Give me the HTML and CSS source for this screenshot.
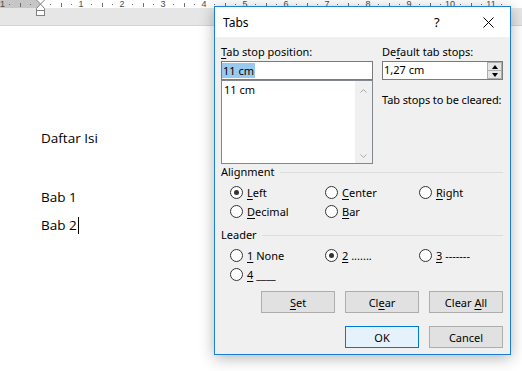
FILE: index.html
```html
<!DOCTYPE html>
<html lang="id">
<head>
    <meta charset="UTF-8">
    <meta name="viewport" content="width=device-width, initial-scale=1.0">
    <title>Tabs</title>
    <link rel="stylesheet" href="styles.css">
</head>
<body>
    <!-- Penggaris (ruler) -->
    <div class="ruler">
        <div class="ruler-strip">
            <div class="ruler-scale">
                <span class="cm">1</span>
                <span class="cm"></span>
                <span class="cm">1</span>
                <span class="cm">2</span>
                <span class="cm">3</span>
                <span class="cm">4</span>
                <span class="cm">5</span>
                <span class="cm">6</span>
                <span class="cm">7</span>
                <span class="cm">8</span>
                <span class="cm">9</span>
                <span class="cm">10</span>
                <span class="cm">11</span>
            </div>
        </div>
        <svg class="indent-marker" width="10" height="17" viewBox="0 0 10 17">
            <path d="M0.5 0 L4.5 4 L8.5 0" fill="#fff" stroke="#7f7f7f"/>
            <path d="M4.5 4 L0.5 8.5 V10.5 H8.5 V8.5 Z" fill="#fff" stroke="#7f7f7f"/>
            <rect x="0.5" y="10.5" width="8" height="5" fill="#fff" stroke="#7f7f7f"/>
        </svg>
    </div>

    <!-- Isi dokumen -->
    <main class="page">
        <p class="line">Daftar Isi</p>
        <p class="line spaced">Bab 1</p>
        <p class="line">Bab 2<span class="caret"></span></p>
    </main>

    <!-- Dialog Tabs -->
    <div class="dialog">
        <div class="titlebar">
            <span class="title">Tabs</span>
            <span class="help">?</span>
            <span class="close">
                <svg width="11" height="11" viewBox="0 0 11 11">
                    <path d="M0.5 0.5 L10.5 10.5 M10.5 0.5 L0.5 10.5" stroke="#000" stroke-width="1"/>
                </svg>
            </span>
        </div>
        <div class="dlg-body">
            <div class="stops">
                <div class="col-left">
                    <div class="lbl"><u>T</u>ab stop position:</div>
                    <div class="textbox"><span class="sel">11 cm</span></div>
                    <div class="listbox">
                        <div class="list-items">
                            <div class="list-item">11 cm</div>
                        </div>
                        <div class="scrollbar">
                            <svg width="7" height="4" viewBox="0 0 7 4"><path d="M0.5 3.5 L3.5 0.5 L6.5 3.5" fill="none" stroke="#a6a6a6"/></svg>
                            <svg width="7" height="4" viewBox="0 0 7 4"><path d="M0.5 0.5 L3.5 3.5 L6.5 0.5" fill="none" stroke="#a6a6a6"/></svg>
                        </div>
                    </div>
                </div>
                <div class="col-right">
                    <div class="lbl">De<u>f</u>ault tab stops:</div>
                    <div class="spinner">
                        <span class="spin-value">1,27 cm</span>
                        <div class="spin-btns">
                            <span class="spin-btn up"></span>
                            <span class="spin-btn down"></span>
                        </div>
                    </div>
                    <div class="note">Tab stops to be cleared:</div>
                </div>
            </div>

            <div class="group">
                <div class="group-title">Alignment</div>
                <div class="radios">
                    <div class="radio checked"><span class="circle"></span><span><u>L</u>eft</span></div>
                    <div class="radio"><span class="circle"></span><span><u>C</u>enter</span></div>
                    <div class="radio"><span class="circle"></span><span><u>R</u>ight</span></div>
                    <div class="radio"><span class="circle"></span><span><u>D</u>ecimal</span></div>
                    <div class="radio"><span class="circle"></span><span><u>B</u>ar</span></div>
                </div>
            </div>

            <div class="group leader">
                <div class="group-title">Leader</div>
                <div class="radios">
                    <div class="radio"><span class="circle"></span><span><u>1</u> None</span></div>
                    <div class="radio checked"><span class="circle"></span><span><u>2</u> .......</span></div>
                    <div class="radio"><span class="circle"></span><span><u>3</u> -------</span></div>
                    <div class="radio"><span class="circle"></span><span><u>4</u> ____</span></div>
                </div>
            </div>

            <div class="buttons">
                <button class="btn"><u>S</u>et</button>
                <button class="btn">Cl<u>e</u>ar</button>
                <button class="btn">Clear <u>A</u>ll</button>
            </div>
            <div class="buttons last">
                <button class="btn default">OK</button>
                <button class="btn">Cancel</button>
            </div>
        </div>
    </div>
</body>
</html>
```

FILE: styles.css
```css
/* Warna dasar */
:root {
    --dlg-bg: #F0F0F0;
    --dlg-border: #1C7FD6;
    --field-border: #7A7A7A;
    --btn-bg: #E1E1E1;
    --btn-border: #ADADAD;
    --group-line: #DCDCDC;
    --ruler-band: #E6E6E6;
    --ruler-margin: #C6C6C6;
    --tick: #6E6E6E;
}

html, body {
    margin: 0;
    height: 100%;
    overflow: hidden;
}

body {
    background: #FFFFFF;
    color: #000;
    font-family: "Open Sans", "Noto Sans", sans-serif;
}

/* Penggaris */
.ruler {
    position: relative;
    height: 25px;
    background: var(--ruler-band);
    border-bottom: 1px solid #D4D4D4;
}

.ruler-strip {
    height: 8px;
    background: linear-gradient(to right, var(--ruler-margin) 40px, #FFFFFF 40px);
}

.ruler-scale {
    display: flex;
    margin-left: -20px;
}

.cm {
    flex: 0 0 41px;
    height: 8px;
    text-align: center;
    font: 9px/8px "Liberation Sans", Arial, sans-serif;
    color: #4A4A4A;
    background:
        linear-gradient(var(--tick), var(--tick)) 0 3px / 1px 4px no-repeat,
        linear-gradient(var(--tick), var(--tick)) 10px 4px / 1px 1px no-repeat,
        linear-gradient(var(--tick), var(--tick)) 30px 4px / 1px 1px no-repeat;
}

.cm:first-child {
    flex-basis: 39.5px;
    box-sizing: border-box;
    padding-left: 20px;
    text-align: left;
    background-position: -1.5px 3px, 28.5px 4px, 48.5px 4px;
}

.indent-marker {
    position: absolute;
    left: 36px;
    top: 0;
}

/* Dokumen */
.page {
    padding: 98px 0 0 41px;
    font-size: 13.5px;
}

.line {
    margin: 0;
    line-height: 28px;
}

.line.spaced {
    margin-top: 31px;
}

.caret {
    display: inline-block;
    width: 1px;
    height: 17px;
    background: #000;
    vertical-align: -4px;
    margin-left: 1px;
}

/* Dialog */
.dialog {
    position: absolute;
    left: 214px;
    top: 6px;
    width: 297px;
    box-sizing: border-box;
    border: 1px solid var(--dlg-border);
    background: var(--dlg-bg);
    box-shadow: 0 3px 14px rgba(0, 0, 0, 0.3);
    font-family: "Noto Sans", sans-serif;
    font-size: 11px;
    line-height: 15px;
}

.titlebar {
    height: 30px;
    background: #FFFFFF;
    display: flex;
    align-items: center;
    padding-left: 8px;
}

.titlebar .title {
    font-size: 12px;
    flex-grow: 1;
}

.titlebar .help {
    font-size: 13px;
    width: 12px;
    margin-right: 37px;
}

.titlebar .close {
    display: flex;
    margin-right: 16px;
}

.dlg-body {
    padding: 7px 7px 6px 6px;
}

u {
    text-underline-offset: 2px;
}

.stops {
    display: flex;
    gap: 9px;
}

.col-left {
    width: 152px;
}

.col-right {
    width: 121px;
}

.lbl {
    margin-bottom: 2px;
}

.textbox {
    height: 19px;
    box-sizing: border-box;
    border: 1px solid var(--field-border);
    background: #FFFFFF;
    padding: 1px 0 0 0;
}

.textbox .sel {
    display: inline-block;
    background: #99C9EF;
    padding: 0 1px;
}

.listbox {
    height: 84px;
    box-sizing: border-box;
    border: 1px solid #828790;
    background: #FFFFFF;
    display: flex;
}

.list-items {
    flex-grow: 1;
    padding: 1px 2px;
}

.scrollbar {
    width: 17px;
    background: var(--dlg-bg);
    display: flex;
    flex-direction: column;
    justify-content: space-between;
    align-items: center;
    padding: 8px 0 5px;
}

.spinner {
    height: 19px;
    box-sizing: border-box;
    border: 1px solid var(--field-border);
    background: #FFFFFF;
    display: flex;
}

.spin-value {
    flex-grow: 1;
    padding-left: 1px;
}

.spin-btns {
    width: 15px;
    display: flex;
    flex-direction: column;
}

.spin-btn {
    flex: 1;
    background: #E6E6E6;
    border: 1px solid var(--btn-border);
    display: flex;
    align-items: center;
    justify-content: center;
}

.spin-btn + .spin-btn {
    border-top: none;
}

.spin-btn::after {
    content: "";
    border-left: 3px solid transparent;
    border-right: 3px solid transparent;
}

.spin-btn.up::after {
    border-bottom: 4px solid #000;
}

.spin-btn.down::after {
    border-top: 4px solid #000;
}

.note {
    margin-top: 12px;
    white-space: nowrap;
    letter-spacing: -0.1px;
}

/* Grup radio */
.group-title {
    display: flex;
}

.group-title::after {
    content: "";
    flex-grow: 1;
    height: 1px;
    background: var(--group-line);
    margin: 8px 0 0 5px;
}

.group.leader {
    margin-top: 8px;
}

.radios {
    display: grid;
    grid-template-columns: 95px 94px 1fr;
    row-gap: 4px;
    padding-left: 9px;
    margin-top: 6px;
}

.radio {
    display: flex;
    align-items: center;
    gap: 4px;
}

.circle {
    width: 13px;
    height: 13px;
    box-sizing: border-box;
    border: 1px solid #333333;
    border-radius: 50%;
    background: #FFFFFF;
    display: flex;
    align-items: center;
    justify-content: center;
}

.radio.checked .circle::after {
    content: "";
    width: 5px;
    height: 5px;
    border-radius: 50%;
    background: #333333;
}

/* Tombol */
.buttons {
    display: flex;
    justify-content: flex-end;
    gap: 10px;
    margin-top: 9px;
}

.buttons.last {
    margin-top: 13px;
}

.btn {
    width: 74px;
    height: 22px;
    border: 1px solid var(--btn-border);
    background: var(--btn-bg);
    font: inherit;
    color: #000;
    padding: 0;
}

.btn.default {
    border-color: #0078D7;
    background: #E5F1FB;
}
```
